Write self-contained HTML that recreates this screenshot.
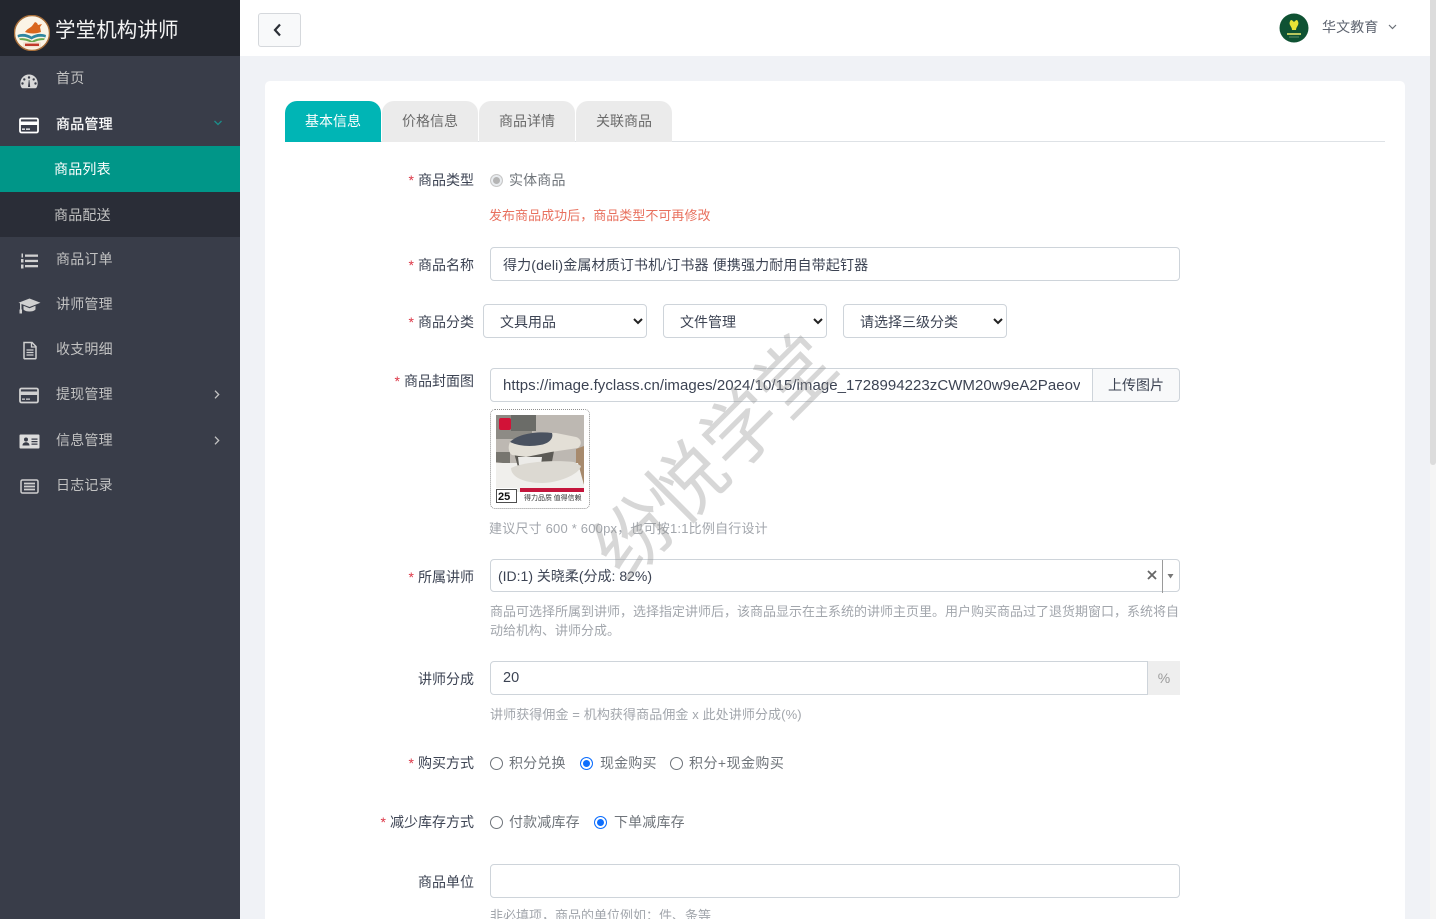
<!DOCTYPE html>
<html lang="zh-CN"><head><meta charset="utf-8"><title>商品管理</title>
<style>
*{box-sizing:border-box}
html,body{margin:0;padding:0;width:1436px;height:919px;overflow:hidden;background:#f0f2f6;font-family:"Liberation Sans","Noto Sans CJK SC",sans-serif;font-size:14px;color:#3c4353}
#wrap{position:absolute;left:0;top:0;width:1436px;height:919px;overflow:hidden}
.a{position:absolute;white-space:nowrap}
#side{position:absolute;left:0;top:0;width:240px;height:919px;background:#393d49}
#logo{position:absolute;left:0;top:0;width:240px;height:56px;background:#23262e}
.mi{position:absolute;left:56px;line-height:20px;color:#c2c2c2;font-size:14px;letter-spacing:.2px}
.ic{position:absolute;left:19px}
.chev{position:absolute;left:214px}
#main{position:absolute;left:240px;top:0;width:1190px;height:919px;background:#f0f2f6}
#top{position:absolute;left:240px;top:0;width:1190px;height:56px;background:#fff}
#card{position:absolute;left:265px;top:81px;width:1140px;height:838px;background:#fff;border-radius:5px 5px 0 0}
.tab{position:absolute;top:101px;height:41px;width:96px;background:#ebebeb;border-radius:12px 12px 0 0;text-align:center;line-height:40px;color:#6a6a6a;font-size:14px}
.l{position:absolute;right:962px;text-align:right;line-height:20px;color:#3c4353;white-space:nowrap}
.l b{font-weight:400;color:#dc3545;margin-right:4px}
.inp{position:absolute;background:#fff;border:1px solid #ced4da;border-radius:4px;color:#3c4353;padding-left:12px;font-size:14px;white-space:nowrap;overflow:hidden}
.sel{position:absolute;top:304px;width:164px;height:34px;background:#fff;border:1px solid #ced4da;border-radius:4px;line-height:34px;padding-left:16px;color:#3c4353}
.h{position:absolute;left:490px;color:#a2a6ac;font-size:13px;line-height:19px;white-space:nowrap}
.r{position:absolute;width:13px;height:13px;border-radius:50%;border:1px solid #6f747a;background:#fff}
.r.on{border-color:#0d6efd;background:#0d6efd;box-shadow:inset 0 0 0 2px #fff}
.t{position:absolute;line-height:20px;color:#6f747a;white-space:nowrap;letter-spacing:.15px}
</style></head><body><div id="wrap">
<div id="main"></div>
<div style="position:absolute;left:1430px;top:0;width:6px;height:919px;background:#f5f5f5"></div>
<div style="position:absolute;left:1430px;top:0;width:6px;height:465px;background:#dcdcdc;border-radius:0 0 3px 3px"></div>
<div id="top"></div>
<div id="card"></div>

<div id="side"></div>
<div id="logo"></div>
<svg class="a" style="left:14px;top:15px" width="36" height="36" viewBox="0 0 36 36">
<circle cx="18" cy="18" r="17.500" fill="#fbf4e6" stroke="#a86f3a" stroke-width="1.400"/>
<path d="M11 17c2-3 5-4 7-6l3-4 2 1 1 2 4-1-2 3 1 5c-5 2-11 2-16 0z" fill="#d9661e"/>
<path d="M3.500 20c5-2 10-1 14 1.500 4-2.500 9-3.500 14.500-1.500l-.5 2.500c-5-1.500-10-.5-14 2-4-2.500-9-3.500-13.500-2z" fill="#2f86a0"/>
<path d="M5 23.500c4-1 9 0 13 2.500 4-2.500 9-3.500 13-2.500l-1 1.500c-4 0-8 1-12 3-4-2-8-3-12-3z" fill="#6aa84f"/>
<rect x="9" y="27" width="18" height="5.500" rx="1" fill="#f3e3d2"/>
<path d="M11 29.800h14" stroke="#c0392b" stroke-width="2.400"/>
</svg>
<div class="a" style="left:55px;top:17px;font-size:20.500px;line-height:28px;color:#f2f2f2;letter-spacing:.1px">学堂机构讲师</div>

<svg class="ic" style="top:73px" width="20" height="16" viewBox="0 0 20 16"><path fill-rule="evenodd" d="M10 1.500A8.700 8.700 0 0 0 1.300 10.200c0 1.800.5 3.300 1.300 4.600.2.200.5.400.8.400h13.200c.3 0 .6-.2.800-.4.800-1.300 1.300-2.800 1.300-4.600A8.700 8.700 0 0 0 10 1.500zM10 3.300a1.200 1.200 0 1 1 0 2.400 1.200 1.200 0 0 1 0-2.400zM5.300 5.200a1.200 1.200 0 1 1 0 2.400 1.200 1.200 0 0 1 0-2.400zM3.500 9.300a1.200 1.200 0 1 1 0 2.400 1.200 1.200 0 0 1 0-2.400zM16.500 9.300a1.200 1.200 0 1 1 0 2.400 1.200 1.200 0 0 1 0-2.400zM14.700 5.200a1.200 1.200 0 1 1 0 2.400 1.200 1.200 0 0 1 0-2.400zM9 14l.8-7h.6l.8 7z" fill="#d8d8d8"/></svg>
<div class="mi" style="top:68px">首页</div>

<svg class="ic" style="top:117px" width="20" height="17" viewBox="0 0 20 17"><rect x="1" y="1.500" width="18" height="14" rx="1.500" fill="none" stroke="#fff" stroke-width="1.800"/><rect x="1" y="4.500" width="18" height="3.500" fill="#fff"/><rect x="3" y="11.500" width="3" height="1.300" fill="#fff"/><rect x="7" y="11.500" width="4" height="1.300" fill="#fff"/></svg>
<div class="mi" style="top:114px;color:#fff;-webkit-text-stroke:.25px #fff">商品管理</div>
<svg class="chev" style="top:120px" width="8" height="6" viewBox="0 0 8 6"><path d="M.5 1l3.500 3.500L7.500 1" fill="none" stroke="#1c8f8b" stroke-width="1.300"/></svg>

<div style="position:absolute;left:0;top:146px;width:240px;height:46px;background:#009688"></div>
<div style="position:absolute;left:0;top:192px;width:240px;height:45px;background:#2a2d37"></div>
<div class="mi" style="left:54px;top:159px;color:#fff">商品列表</div>
<div class="mi" style="left:54px;top:205px;color:#c2c2c2">商品配送</div>

<svg class="ic" style="top:252px" width="20" height="18" viewBox="0 0 20 18"><rect x="6" y="2.500" width="13" height="2.300" fill="#d0d0d0"/><rect x="6" y="7.800" width="13" height="2.300" fill="#d0d0d0"/><rect x="6" y="13" width="13" height="2.300" fill="#d0d0d0"/><rect x="2.500" y="1.500" width="1.500" height="4" fill="#d0d0d0"/><rect x="2" y="7" width="2.500" height="3.500" fill="#d0d0d0"/><rect x="2" y="12.500" width="2.500" height="4" fill="#d0d0d0"/></svg>
<div class="mi" style="top:249px">商品订单</div>

<svg class="ic" style="left:18px;top:297px" width="23" height="17" viewBox="0 0 23 17"><path d="M11.500 1.500L22.500 5.800 11.500 10 3.500 7v6.500H2V6.200L.5 5.800z" fill="#d0d0d0"/><path d="M5.500 8.800v3.700c1.500 1.500 3.500 2 6 2s4.500-.5 6-2V8.800l-6 2.400z" fill="#d0d0d0"/><rect x="1.500" y="12.500" width="2.500" height="4" fill="#d0d0d0"/></svg>
<div class="mi" style="top:294px">讲师管理</div>

<svg class="ic" style="left:22px;top:341px" width="16" height="19" viewBox="0 0 16 19"><path d="M2 1.500h8l4 4V17a.8.800 0 0 1-.8.800H2.800A.8.800 0 0 1 2 17z" fill="none" stroke="#d0d0d0" stroke-width="1.500"/><path d="M9.500 1.500v4.500H14" fill="none" stroke="#d0d0d0" stroke-width="1.300"/><path d="M4.500 9h7M4.500 11.500h7M4.500 14h7" stroke="#d0d0d0" stroke-width="1.300"/></svg>
<div class="mi" style="top:339px">收支明细</div>

<svg class="ic" style="top:387px" width="20" height="17" viewBox="0 0 20 17"><rect x="1" y="1.500" width="18" height="14" rx="1.500" fill="none" stroke="#d0d0d0" stroke-width="1.800"/><rect x="1" y="4.500" width="18" height="3.500" fill="#d0d0d0"/><rect x="3" y="11.500" width="3" height="1.300" fill="#d0d0d0"/><rect x="7" y="11.500" width="4" height="1.300" fill="#d0d0d0"/></svg>
<div class="mi" style="top:384px">提现管理</div>
<svg class="chev" style="top:390px" width="6" height="9" viewBox="0 0 6 9"><path d="M1 .7l3.700 3.800L1 8.300" fill="none" stroke="#c2c2c2" stroke-width="1.300"/></svg>

<svg class="ic" style="top:433px" width="21" height="17" viewBox="0 0 21 17"><path fill-rule="evenodd" d="M1.500 1.500h18a1 1 0 0 1 1 1v12a1 1 0 0 1-1 1h-18a1 1 0 0 1-1-1v-12a1 1 0 0 1 1-1zM7 4.500a2 2 0 1 0 0 4 2 2 0 0 0 0-4zM3.500 12.500h7c0-2-1.500-3.200-3.500-3.200s-3.500 1.200-3.500 3.200zM12.500 5.500v1.200h6V5.500zM12.500 8v1.200h6V8zM12.500 10.500v1.200h6v-1.200z" fill="#dcdcdc"/></svg>
<div class="mi" style="top:430px">信息管理</div>
<svg class="chev" style="top:436px" width="6" height="9" viewBox="0 0 6 9"><path d="M1 .7l3.700 3.800L1 8.300" fill="none" stroke="#c2c2c2" stroke-width="1.300"/></svg>

<svg class="ic" style="left:20px;top:479px" width="19" height="15" viewBox="0 0 19 15"><rect x="1" y="1" width="17" height="13" rx="1.500" fill="none" stroke="#cfcfcf" stroke-width="1.500"/><path d="M4 4.500h11M4 7.500h11M4 10.500h11" stroke="#cfcfcf" stroke-width="1.700"/></svg>
<div class="mi" style="top:475px">日志记录</div>

<!-- top bar -->
<div style="position:absolute;left:258px;top:13px;width:43px;height:34px;background:#f8f9fa;border:1px solid #d5d8dc;border-radius:3px"></div>
<svg class="a" style="left:273px;top:23px" width="9" height="14" viewBox="0 0 9 14"><path d="M7 1.500L2 7l5 5.500" fill="none" stroke="#2b2f36" stroke-width="2.200"/></svg>
<svg class="a" style="left:1279px;top:13px" width="30" height="30" viewBox="0 0 30 30"><circle cx="15" cy="15" r="14.500" fill="#0f5233"/><path d="M11 12c-1-2 0-4 1-5 1 0 2 1 3 2 1-1 2-2 3-2 1 1 2 3 1 5-1 2-2 3-2 5h-4c0-2-1-3-2-5z" fill="#e6e236"/><rect x="8" y="20" width="14" height="2" fill="#b9c65e"/><rect x="10" y="23.500" width="10" height="1" fill="#5f8f68"/></svg>
<div class="a" style="left:1322px;top:17px;line-height:20px;color:#5e6470;letter-spacing:.1px">华文教育</div>
<svg class="a" style="left:1388px;top:24px" width="9" height="6" viewBox="0 0 9 6"><path d="M1 1l3.500 3.500L8 1" fill="none" stroke="#6b7078" stroke-width="1.200"/></svg>

<!-- tabs -->
<div style="position:absolute;left:285px;top:141px;width:1100px;height:1px;background:#dee2e6"></div>
<div class="tab" style="left:285px;background:#00b5b5;color:#fff;height:41px">基本信息</div>
<div class="tab" style="left:382px">价格信息</div>
<div class="tab" style="left:479px">商品详情</div>
<div class="tab" style="left:576px">关联商品</div>

<!-- rows -->
<div class="l" style="top:170px"><b>*</b>商品类型</div>
<div class="r" style="left:490px;top:174px;border-color:#c8c8c8;background:#b4b4b4;box-shadow:inset 0 0 0 2px #e9ecef"></div>
<div class="t" style="left:509px;top:170px">实体商品</div>
<div class="h" style="top:206px;color:#e8705e;left:489px;line-height:20px;letter-spacing:.03px">发布商品成功后，商品类型不可再修改</div>

<div class="l" style="top:255px"><b>*</b>商品名称</div>
<div class="inp" style="left:490px;top:247px;width:690px;height:34px;line-height:34px;letter-spacing:.14px">得力(deli)金属材质订书机/订书器 便携强力耐用自带起钉器</div>

<div class="l" style="top:312px"><b>*</b>商品分类</div>
<div class="sel" style="left:483px">文具用品<svg style="position:absolute;left:149px;top:13px" width="10" height="7" viewBox="0 0 10 7"><path d="M1 1l4 4 4-4" fill="none" stroke="#222" stroke-width="2"/></svg></div>
<div class="sel" style="left:663px">文件管理<svg style="position:absolute;left:149px;top:13px" width="10" height="7" viewBox="0 0 10 7"><path d="M1 1l4 4 4-4" fill="none" stroke="#222" stroke-width="2"/></svg></div>
<div class="sel" style="left:843px">请选择三级分类<svg style="position:absolute;left:149px;top:13px" width="10" height="7" viewBox="0 0 10 7"><path d="M1 1l4 4 4-4" fill="none" stroke="#222" stroke-width="2"/></svg></div>

<div class="l" style="top:371px"><b>*</b>商品封面图</div>
<div class="inp" style="left:490px;top:368px;width:603px;height:34px;line-height:33px;border-radius:4px 0 0 4px"><span style="display:block;width:577px;overflow:hidden;font-size:15px;letter-spacing:.04px">https://image.fyclass.cn/images/2024/10/15/image_1728994223zCWM20w9eA2Paeov</span></div>
<div style="position:absolute;left:1092px;top:368px;width:88px;height:34px;background:#f8f9fa;border:1px solid #ced4da;border-radius:0 4px 4px 0;text-align:center;line-height:33px;color:#3c4353">上传图片</div>

<div style="position:absolute;left:490px;top:409px;width:100px;height:100px;border:1px dotted #8f8f8f;border-radius:5px"></div>
<svg class="a" style="left:496px;top:415px" width="88" height="88" viewBox="0 0 88 88">
<rect width="88" height="88" fill="#bdb8b2"/>
<rect x="0" y="0" width="36" height="24" fill="#8d8b85"/>
<rect x="15" y="0" width="25" height="16" fill="#6b6c68"/>
<path d="M80 34l8-3v38l-8 2z" fill="#a78a6d"/>
<path d="M0 37h14v12L0 47z" fill="#77756f"/>
<path d="M0 48h82l6 22v18H0z" fill="#f0efec"/>
<path d="M18 38l40-2-3 16H22z" fill="#5c5a55"/>
<path d="M22 42l24 0-1 8H23z" fill="#ecebe8"/>
<path d="M14 27C25 20 45 17 60 18l20 4c6 2 6 8 2 11L55 37l-25 5-14-2c-4-3-4-9-2-13z" fill="#e3dfd6"/>
<path d="M14 27C22 19 40 16 56 18c2 6-4 11-12 12-10 2-22 1-30-3z" fill="#4a5260"/>
<path d="M15 53C30 46 60 45 78 47l7 4c-2 9-24 17-39 17-18 0-31-6-31-15z" fill="#dcd9d2"/>
<rect x="3" y="3" width="12" height="12" rx="2" fill="#d21237"/>
<rect x="24" y="73" width="64" height="4" fill="#c4153c"/>
<rect x="0" y="77" width="88" height="11" fill="#fff"/>
<rect x="0" y="73" width="21" height="15" fill="#fff"/>
<rect x=".5" y="74.500" width="20" height="13" fill="none" stroke="#222" stroke-width=".8"/>
<text x="2" y="85" font-size="11" font-weight="700" fill="#111" font-family="Liberation Sans,sans-serif">25</text>
<text x="28" y="85" font-size="7" fill="#333" font-family="Noto Sans CJK SC,sans-serif">得力品质 值得信赖</text>
</svg>
<div class="h" style="top:519px;letter-spacing:.2px;left:489px">建议尺寸 600 * 600px，也可按1:1比例自行设计</div>

<div class="l" style="top:567px"><b>*</b>所属讲师</div>
<div class="inp" style="left:490px;top:559px;width:690px;height:33px;line-height:32px;padding-left:7px">(ID:1) 关晓柔(分成: 82%)</div>
<div style="position:absolute;left:1162px;top:560px;width:1px;height:33px;background:#9a9a9a"></div>
<svg class="a" style="left:1147px;top:570px" width="10" height="10" viewBox="0 0 10 10"><path d="M1 1l8 8M9 1l-8 8" stroke="#666" stroke-width="1.800"/></svg>
<svg class="a" style="left:1167px;top:574px" width="7" height="5" viewBox="0 0 7 5"><path d="M0.500 0h6L3.500 4.500z" fill="#777"/></svg>
<div class="h" style="top:602px;width:692px;white-space:normal">商品可选择所属到讲师，选择指定讲师后，该商品显示在主系统的讲师主页里。用户购买商品过了退货期窗口，系统将自动给机构、讲师分成。</div>

<div class="l" style="top:669px">讲师分成</div>
<div class="inp" style="left:490px;top:661px;width:658px;height:34px;line-height:33px;border-radius:4px 0 0 4px;font-size:14.500px">20</div>
<div style="position:absolute;left:1148px;top:661px;width:32px;height:34px;background:#eeeeee;text-align:center;line-height:34px;color:#9a9a9a">%</div>
<div class="h" style="top:705px;letter-spacing:.1px">讲师获得佣金 = 机构获得商品佣金 x 此处讲师分成(%)</div>

<div class="l" style="top:753px"><b>*</b>购买方式</div>
<div class="r" style="left:490px;top:757px"></div><div class="t" style="left:509px;top:753px">积分兑换</div>
<div class="r on" style="left:580px;top:757px"></div><div class="t" style="left:600px;top:753px">现金购买</div>
<div class="r" style="left:670px;top:757px"></div><div class="t" style="left:689px;top:753px;letter-spacing:.45px">积分+现金购买</div>

<div class="l" style="top:812px"><b>*</b>减少库存方式</div>
<div class="r" style="left:490px;top:816px"></div><div class="t" style="left:509px;top:812px">付款减库存</div>
<div class="r on" style="left:594px;top:816px"></div><div class="t" style="left:614px;top:812px">下单减库存</div>

<div class="l" style="top:872px">商品单位</div>
<div class="inp" style="left:490px;top:864px;width:690px;height:34px"></div>
<div class="h" style="top:906px">非必填项，商品的单位例如：件、条等</div>

<!-- watermark -->
<div class="a" style="left:540px;top:404px;width:340px;height:96px;line-height:96px;font-size:76px;text-align:center;color:rgba(150,150,150,.38);transform:rotate(-45deg);font-weight:400;font-family:'Noto Sans CJK SC',sans-serif;pointer-events:none">纷悦学堂</div>
</div></body></html>
